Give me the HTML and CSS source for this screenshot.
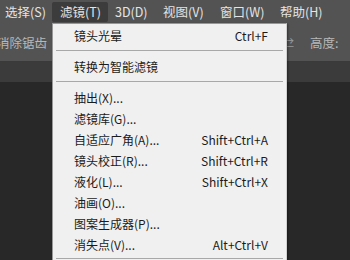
FILE: index.html
```html
<!DOCTYPE html>
<html lang="zh-CN">
<head>
    <meta charset="UTF-8">
    <title>滤镜菜单</title>
    <link rel="stylesheet" href="styles.css">
</head>
<body>

    <div class="app">
        <div class="menubar">
            <span class="menu-item m-select">选择(S)</span>
            <span class="menu-item m-filter active">滤镜(T)</span>
            <span class="menu-item m-3d">3D(D)</span>
            <span class="menu-item m-view">视图(V)</span>
            <span class="menu-item m-window">窗口(W)</span>
            <span class="menu-item m-help">帮助(H)</span>
        </div>

        <div class="toolbar">
            <span class="tool-label">消除锯齿</span>
            <span class="swap">⇄</span>
            <span class="tool-height">高度:</span>
        </div>

        <div class="tabs"></div>
        <div class="workspace"></div>

        <!-- 下拉菜单 -->
        <div class="dropdown">
            <div class="row"><span>镜头光晕</span><span class="key">Ctrl+F</span></div>
            <div class="sep"></div>
            <div class="row"><span>转换为智能滤镜</span></div>
            <div class="sep"></div>
            <div class="row"><span>抽出(X)...</span></div>
            <div class="row"><span>滤镜库(G)...</span></div>
            <div class="row"><span>自适应广角(A)...</span><span class="key">Shift+Ctrl+A</span></div>
            <div class="row"><span>镜头校正(R)...</span><span class="key">Shift+Ctrl+R</span></div>
            <div class="row"><span>液化(L)...</span><span class="key">Shift+Ctrl+X</span></div>
            <div class="row"><span>油画(O)...</span></div>
            <div class="row"><span>图案生成器(P)...</span></div>
            <div class="row"><span>消失点(V)...</span><span class="key">Alt+Ctrl+V</span></div>
            <div class="sep"></div>
        </div>
    </div>

</body>
</html>
```

FILE: styles.css
```css
* {
    box-sizing: border-box;
    margin: 0;
    padding: 0;
}

body {
    font-family: "Noto Sans CJK SC", "Noto Sans", sans-serif;
    font-size: 12px;
    background-color: #282828;
    overflow: hidden;
}

.app {
    position: relative;
    width: 350px;
    height: 260px;
    overflow: hidden;
}

.menubar {
    height: 24px;
    background-color: #535353;
    display: flex;
    align-items: center;
    padding-left: 5px;
    color: #e4e4e4;
    font-size: 12.5px;
    white-space: nowrap;
}

.menu-item {
    flex-shrink: 0;
    height: 20px;
    line-height: 20px;
    padding-left: 8px;
}

.m-select {
    width: 47px;
    padding-left: 0;
}

.m-filter {
    width: 56px;
}

.m-3d {
    width: 47px;
    padding-left: 7px;
}

.m-view {
    width: 57px;
}

.m-window {
    width: 60px;
}

.menu-item.active {
    background-color: #3c3c3c;
    border-radius: 2px;
}

.toolbar {
    height: 38px;
    background-color: #535353;
    border-bottom: 1px solid #3a3a3a;
    display: flex;
    align-items: center;
    color: #b8b8b8;
    font-size: 12.5px;
    white-space: nowrap;
}

.tool-label {
    margin-left: -3px;
}

.swap {
    margin-left: 236px;
    font-size: 11px;
    color: #9a9a9a;
}

.tool-height {
    margin-left: 16px;
}

.tabs {
    height: 20px;
    background-color: #3b3b3b;
}

.workspace {
    height: 200px;
    background-color: #282828;
}

/* 下拉菜单 */
.dropdown {
    position: absolute;
    left: 52px;
    top: 23px;
    width: 235px;
    height: 240px;
    background-color: #f0f0f0;
    border: 1px solid #979797;
    border-right-color: #d0d0d0;
    box-shadow: 1px 1px 2px rgba(0, 0, 0, 0.4);
    padding-top: 1px;
    color: #1b1b1b;
}

.row {
    height: 21px;
    display: flex;
    justify-content: space-between;
    align-items: center;
    padding: 0 18px 0 21px;
}

.key {
    font-size: 12px;
}

.sep {
    height: 1px;
    background-color: #a8a8a8;
    margin: 4px 3px 5px 3px;
}

.dropdown .sep:last-child {
    margin-top: 3px;
}
```
